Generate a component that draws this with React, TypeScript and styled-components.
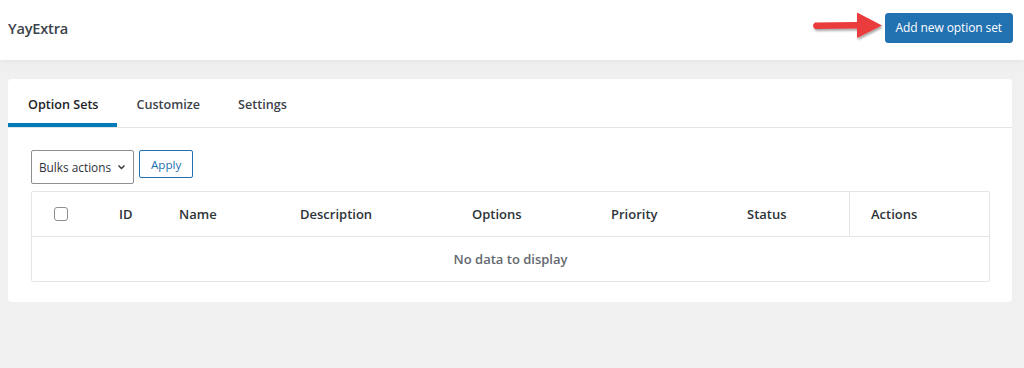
import React from 'react'
import styled, { createGlobalStyle } from 'styled-components'

const GlobalStyle = createGlobalStyle`
  html, body {
    margin: 0;
    padding: 0;
    background: #f0f0f1;
    font-family: 'Open Sans', 'Noto Sans', sans-serif;
    color: #1d2327;
  }
`

const Page = styled.div`
  width: 1024px;
  height: 368px;
  overflow: hidden;
  background: #f0f0f1;
`

const TopBar = styled.header`
  height: 60px;
  background: #fff;
  display: flex;
  align-items: center;
  justify-content: space-between;
  padding: 0 11px 5px 8px;
  box-sizing: border-box;
  box-shadow: 0 1px 6px rgba(0, 0, 0, 0.06);
`

const Brand = styled.h1`
  margin: 0;
  font-size: 14.6px;
  font-weight: 600;
  color: #3c434a;
  letter-spacing: -0.2px;
`

const Right = styled.div`
  display: flex;
  align-items: center;
`

const PrimaryButton = styled.button`
  height: 30px;
  padding: 0 10px;
  background: #2271b1;
  color: #fff;
  border: 1px solid #2271b1;
  border-radius: 3px;
  font-family: inherit;
  font-size: 12px;
  font-weight: 500;
  letter-spacing: -0.1px;
`

const Card = styled.section`
  margin: 19px 12px 0 8px;
  background: #fff;
  border-radius: 4px;
  height: 223px;
  box-sizing: border-box;
`

const Tabs = styled.nav`
  display: flex;
  height: 48px;
  border-bottom: 1px solid #e4e4e4;
`

const Tab = styled.div<{ $active?: boolean }>`
  display: flex;
  align-items: center;
  padding: 2px 18px 0 20px;
  font-size: 12.6px;
  font-weight: 600;
  color: ${(p) => (p.$active ? '#1d2327' : '#3c434a')};
  box-shadow: ${(p) => (p.$active ? 'inset 0 -4px 0 #007cba' : 'none')};
`

const Body = styled.div`
  padding: 22px 22px 0 23px;
`

const Toolbar = styled.div`
  display: flex;
  align-items: flex-start;
  gap: 5px;
  margin-bottom: 7px;
`

const Select = styled.div`
  width: 103px;
  height: 34px;
  box-sizing: border-box;
  border: 1px solid #8c8f94;
  border-radius: 2px;
  display: flex;
  align-items: center;
  justify-content: space-between;
  padding: 0 7px 0 7px;
  font-size: 11.8px;
  color: #2c3338;
`

const OutlineButton = styled.button`
  height: 28px;
  padding: 0 11px;
  background: #fff;
  border: 1px solid #2271b1;
  border-radius: 2px;
  color: #2271b1;
  font-family: inherit;
  font-size: 11.6px;
`

const Table = styled.div`
  border: 1px solid #e6e6e6;
  border-radius: 2px;
`

const Row = styled.div`
  display: grid;
  grid-template-columns: 70px 77px 121px 172px 139px 136px 102px 1fr;
  height: 44px;
  align-items: center;
  border-bottom: 1px solid #e6e6e6;
`

const Cell = styled.div<{ $divider?: boolean; $pad?: number }>`
  height: 100%;
  display: flex;
  align-items: center;
  padding-left: ${(p) => p.$pad ?? 0}px;
  border-left: ${(p) => (p.$divider ? '1px solid #e6e6e6' : 'none')};
  font-size: 13px;
  font-weight: 600;
  color: #2c3338;
  box-sizing: border-box;
`

const Checkbox = styled.span`
  width: 14px;
  height: 14px;
  border: 1px solid #8c8f94;
  border-radius: 3px;
  box-sizing: border-box;
`

const Empty = styled.div`
  height: 44px;
  display: flex;
  align-items: center;
  justify-content: center;
  font-size: 13px;
  font-weight: 600;
  color: #646970;
`

const Arrow = () => (
  <svg width="76" height="40" viewBox="0 0 76 40">
    <defs>
      <filter id="sh" x="-10%" y="-20%" width="130%" height="160%">
        <feDropShadow dx="1" dy="2" stdDeviation="1.3" floodColor="#000" floodOpacity="0.35" />
      </filter>
    </defs>
    <path
      d="M6 14.5 Q2 17.5 6 21 L48 20.5 L48 30 L73 17.5 L48 4.5 L48 14 Z"
      fill="#ea3a3d"
      filter="url(#sh)"
    />
  </svg>
)

const Chevron = () => (
  <svg width="9" height="6" viewBox="0 0 9 6">
    <path d="M1.5 1.5 L4.5 4.5 L7.5 1.5" fill="none" stroke="#2c3338" strokeWidth="1.4" />
  </svg>
)

export default function App() {
  return (
    <Page>
      <GlobalStyle />
      <TopBar>
        <Brand>YayExtra</Brand>
        <Right>
          <Arrow />
          <PrimaryButton>Add new option set</PrimaryButton>
        </Right>
      </TopBar>
      <Card>
        <Tabs>
          <Tab $active>Option Sets</Tab>
          <Tab>Customize</Tab>
          <Tab>Settings</Tab>
        </Tabs>
        <Body>
          <Toolbar>
            <Select>
              <span>Bulks actions</span>
              <Chevron />
            </Select>
            <OutlineButton>Apply</OutlineButton>
          </Toolbar>
          <Table>
            <Row>
              <Cell $pad={22}>
                <Checkbox />
              </Cell>
              <Cell $pad={17}>ID</Cell>
              <Cell>Name</Cell>
              <Cell>Description</Cell>
              <Cell>Options</Cell>
              <Cell>Priority</Cell>
              <Cell>Status</Cell>
              <Cell $divider $pad={21}>Actions</Cell>
            </Row>
            <Empty>No data to display</Empty>
          </Table>
        </Body>
      </Card>
    </Page>
  )
}
